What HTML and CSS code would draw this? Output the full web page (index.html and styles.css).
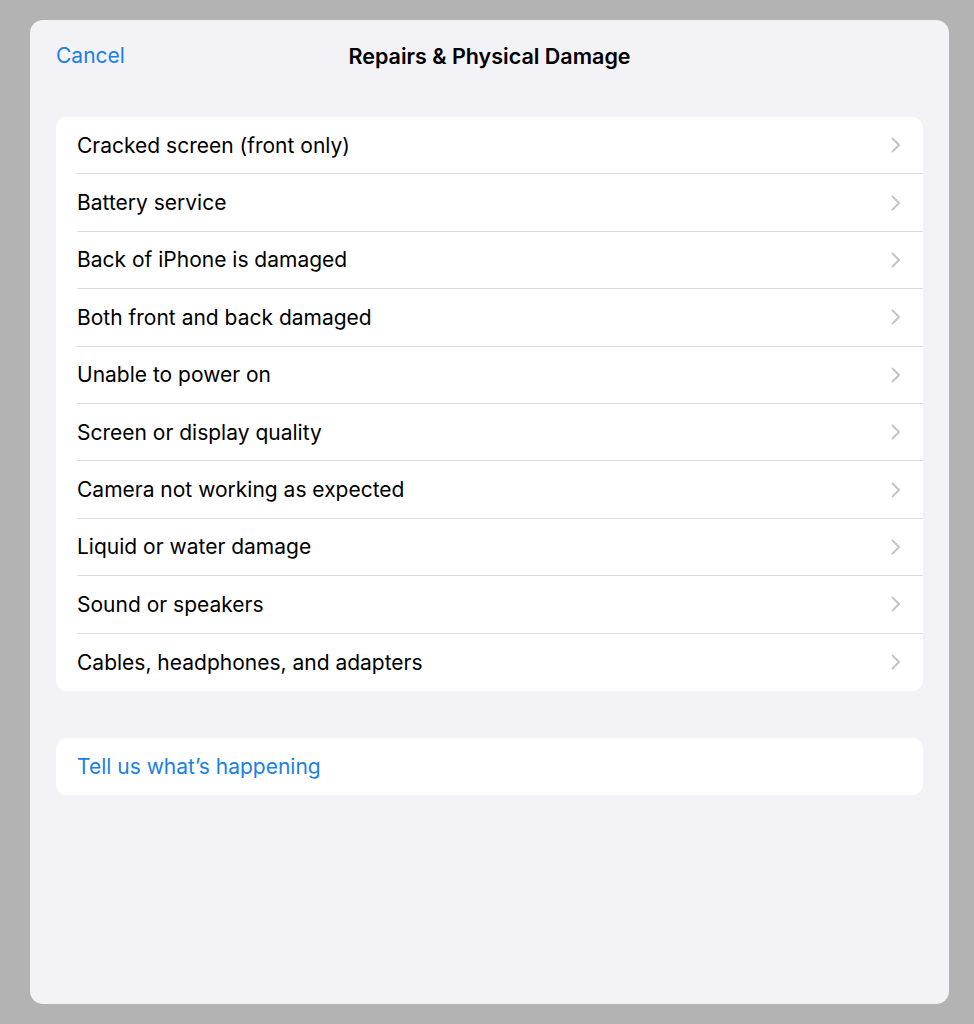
FILE: index.html
```html
<!DOCTYPE html>
<html lang="en">
<head>
<meta charset="utf-8">
<title>Repairs &amp; Physical Damage</title>
<link rel="stylesheet" href="styles.css">
</head>
<body>
<div class="sheet">
  <header class="nav">
    <span class="cancel">Cancel</span>
    <h1 class="title">Repairs &amp; Physical Damage</h1>
  </header>
  <ul class="card list">
    <li class="row"><div class="row-inner"><span>Cracked screen (front only)</span><svg class="chev" viewBox="0 0 10 16"><path d="M1.5 1.5 L8 8 L1.5 14.5"/></svg></div></li>
    <li class="row"><div class="row-inner"><span>Battery service</span><svg class="chev" viewBox="0 0 10 16"><path d="M1.5 1.5 L8 8 L1.5 14.5"/></svg></div></li>
    <li class="row"><div class="row-inner"><span>Back of iPhone is damaged</span><svg class="chev" viewBox="0 0 10 16"><path d="M1.5 1.5 L8 8 L1.5 14.5"/></svg></div></li>
    <li class="row"><div class="row-inner"><span>Both front and back damaged</span><svg class="chev" viewBox="0 0 10 16"><path d="M1.5 1.5 L8 8 L1.5 14.5"/></svg></div></li>
    <li class="row"><div class="row-inner"><span>Unable to power on</span><svg class="chev" viewBox="0 0 10 16"><path d="M1.5 1.5 L8 8 L1.5 14.5"/></svg></div></li>
    <li class="row"><div class="row-inner"><span>Screen or display quality</span><svg class="chev" viewBox="0 0 10 16"><path d="M1.5 1.5 L8 8 L1.5 14.5"/></svg></div></li>
    <li class="row"><div class="row-inner"><span>Camera not working as expected</span><svg class="chev" viewBox="0 0 10 16"><path d="M1.5 1.5 L8 8 L1.5 14.5"/></svg></div></li>
    <li class="row"><div class="row-inner"><span>Liquid or water damage</span><svg class="chev" viewBox="0 0 10 16"><path d="M1.5 1.5 L8 8 L1.5 14.5"/></svg></div></li>
    <li class="row"><div class="row-inner"><span>Sound or speakers</span><svg class="chev" viewBox="0 0 10 16"><path d="M1.5 1.5 L8 8 L1.5 14.5"/></svg></div></li>
    <li class="row"><div class="row-inner"><span>Cables, headphones, and adapters</span><svg class="chev" viewBox="0 0 10 16"><path d="M1.5 1.5 L8 8 L1.5 14.5"/></svg></div></li>
  </ul>
  <div class="card single">
    <div class="row"><div class="row-inner link">Tell us what’s happening</div></div>
  </div>
</div>
</body>
</html>
```

FILE: styles.css
```css
* { box-sizing: border-box; }
html, body { margin: 0; padding: 0; }
body {
  background: #b3b3b3;
  width: 974px;
  height: 1024px;
  padding: 20px 25px 20px 30px;
  font-family: Inter, "Noto Sans", "Liberation Sans", sans-serif;
  -webkit-font-smoothing: antialiased;
}
.sheet {
  width: 919px;
  height: 984px;
  background: #f2f2f7;
  border-radius: 13px;
  padding: 0 26px;
}
.nav {
  position: relative;
  height: 97px;
  display: flex;
  align-items: flex-start;
  justify-content: center;
  padding-top: 22px;
}
.cancel {
  position: absolute;
  left: 0;
  top: 22px;
  font-size: 21px;
  line-height: 28px;
  color: #1a80e5;
}
.title {
  margin: 0;
  font-size: 21.5px;
  line-height: 28px;
  font-weight: 600;
  color: #000;
}
.card {
  background: #fff;
  border-radius: 11px;
  margin: 0;
  padding: 0;
  list-style: none;
  overflow: hidden;
}
.row {
  height: 57.4px;
  padding-left: 21px;
  display: flex;
}
.row-inner {
  flex: 1;
  display: flex;
  align-items: center;
  justify-content: space-between;
  padding-right: 22px;
  border-bottom: 1px solid #dcdce0;
  font-size: 21px;
  color: #000;
}
.row:last-child .row-inner { border-bottom: none; }
.chev {
  width: 10px;
  height: 16px;
  fill: none;
  stroke: #c4c4c8;
  stroke-width: 2;
  stroke-linecap: round;
  stroke-linejoin: round;
}
.single {
  margin-top: 47px;
}
.single .row { height: 57px; }
.link { color: #1a80e5; }
```
